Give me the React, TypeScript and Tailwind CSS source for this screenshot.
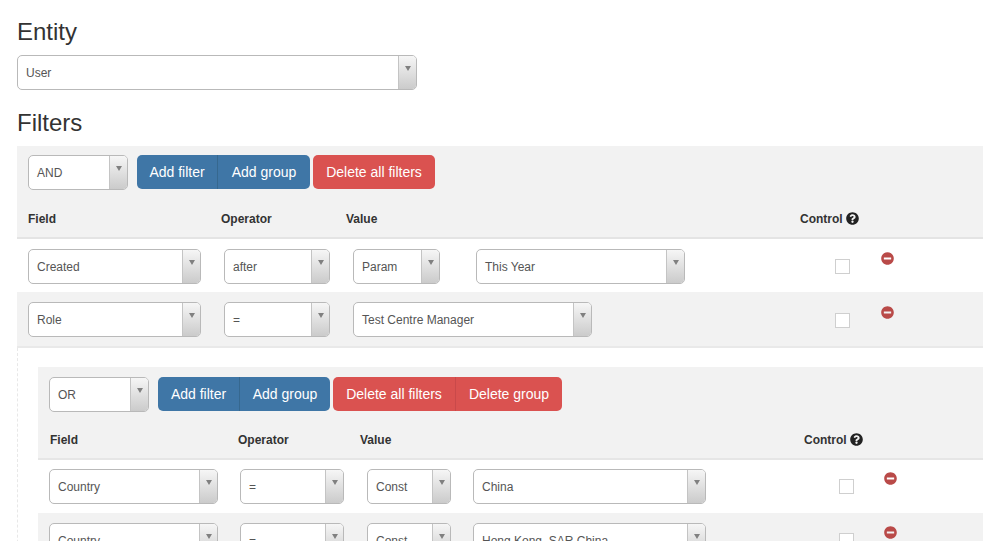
import React from 'react';
import { FaMinusCircle, FaQuestionCircle } from 'react-icons/fa';

const Select: React.FC<{ label: string; className: string }> = ({ label, className }) => (
  <div className={`flex h-[35px] flex-none overflow-hidden rounded-[5px] border border-[#b9b9b9] bg-white text-[12px] text-[#555] ${className}`}>
    <span className="flex flex-1 items-center truncate pl-[8px] pt-[1px]">{label}</span>
    <span className="flex w-[18px] flex-none justify-center border-l border-[#c4c4c4] bg-gradient-to-b from-[#f6f6f6] to-[#cbcbcb] pt-[10px]">
      <svg width="6" height="5" viewBox="0 0 6 5">
        <path d="M0 0h6L3 5z" fill="#808080" />
      </svg>
    </span>
  </div>
);

const Button: React.FC<{ label: string; className: string }> = ({ label, className }) => (
  <button className={`h-[34px] flex-none text-center text-[14px] text-white ${className}`}>{label}</button>
);

const Control: React.FC<{ className: string }> = ({ className }) => (
  <div className={`flex flex-none ${className}`}>
    <div className="mt-[7px] h-[15px] w-[15px] flex-none border border-[#cfcfcf] bg-white" />
    <FaMinusCircle size={13} className="flex-none text-[#b94a48]" />
  </div>
);

const HelpLabel: React.FC = () => (
  <span className="flex h-[16px] items-center gap-[3px]">
    Control
    <FaQuestionCircle size={13} className="-mt-[2px] text-[#222]" />
  </span>
);

const App: React.FC = () => {
  return (
    <div className="h-[541px] w-[1004px] overflow-hidden bg-white pl-[17px] pr-[21px] pt-[19px] font-['Liberation_Sans',Arial,sans-serif] text-[#333]">
      <h3 className="mb-[10px] text-[24px] leading-[26px]">Entity</h3>
      <Select label="User" className="w-[400px]" />
      <h3 className="mb-[10px] mt-[20px] text-[24px] leading-[26px]">Filters</h3>

      <div className="bg-[#f2f2f2]">
        <div className="flex pl-[11px] pt-[9px]">
          <Select label="AND" className="w-[100px]" />
          <div className="ml-[9px] flex">
            <Button label="Add filter" className="w-[81px] rounded-l-[5px] border-r border-[#36688f] bg-[#3f76a6]" />
            <Button label="Add group" className="w-[92px] rounded-r-[5px] bg-[#3f76a6]" />
          </div>
          <Button label="Delete all filters" className="ml-[3px] w-[122px] rounded-[5px] bg-[#da5250]" />
        </div>
        <div className="flex h-[49px] border-b-2 border-[#e4e4e4] pl-[11px] pt-[21px] text-[12px] font-bold leading-[16px]">
          <span className="w-[193px]">Field</span>
          <span className="w-[125px]">Operator</span>
          <span className="w-[454px]">Value</span>
          <HelpLabel />
        </div>

        <div className="flex h-[53px] bg-white pl-[11px] pt-[10px]">
          <Select label="Created" className="w-[173px]" />
          <Select label="after" className="ml-[23px] w-[106px]" />
          <div className="ml-[23px] flex w-[482px] flex-none">
            <Select label="Param" className="w-[87px]" />
            <Select label="This Year" className="ml-[36px] w-[209px]" />
          </div>
          <Control className="gap-[31px] pt-[3px]" />
        </div>

        <div className="flex h-[56px] border-b-2 border-[#e9e9e9] pl-[11px] pt-[10px]">
          <Select label="Role" className="w-[173px]" />
          <Select label="=" className="ml-[23px] w-[106px]" />
          <div className="ml-[23px] flex w-[482px] flex-none">
            <Select label="Test Centre Manager" className="w-[239px]" />
          </div>
          <Control className="gap-[31px] pt-[4px]" />
        </div>
      </div>

      <div className="border-l border-dashed border-[#e8e8e8] pl-[20px] pt-[19px]">
        <div className="bg-[#f2f2f2]">
          <div className="flex pl-[11px] pt-[10px]">
            <Select label="OR" className="w-[100px]" />
            <div className="ml-[9px] flex">
              <Button label="Add filter" className="w-[82px] rounded-l-[5px] border-r border-[#36688f] bg-[#3f76a6]" />
              <Button label="Add group" className="w-[90px] rounded-r-[5px] bg-[#3f76a6]" />
            </div>
            <div className="ml-[3px] flex">
              <Button label="Delete all filters" className="w-[123px] rounded-l-[5px] border-r border-[#c9494a] bg-[#da5250]" />
              <Button label="Delete group" className="w-[106px] rounded-r-[5px] bg-[#da5250]" />
            </div>
          </div>
          <div className="flex h-[48px] border-b-2 border-[#e6e6e6] pl-[12px] pt-[20px] text-[12px] font-bold leading-[16px]">
            <span className="w-[188px]">Field</span>
            <span className="w-[122px]">Operator</span>
            <span className="w-[444px]">Value</span>
            <HelpLabel />
          </div>

          <div className="flex h-[53px] bg-white pl-[11px] pt-[9px]">
            <Select label="Country" className="w-[169px]" />
            <Select label="=" className="ml-[22px] w-[104px]" />
            <div className="ml-[23px] flex w-[472px] flex-none">
              <Select label="Const" className="w-[84px]" />
              <Select label="China" className="ml-[22px] w-[233px]" />
            </div>
            <Control className="gap-[30px] pt-[3px]" />
          </div>

          <div className="flex h-[60px] pl-[11px] pt-[10px]">
            <Select label="Country" className="w-[169px]" />
            <Select label="=" className="ml-[22px] w-[104px]" />
            <div className="ml-[23px] flex w-[472px] flex-none">
              <Select label="Const" className="w-[84px]" />
              <Select label="Hong Kong, SAR China" className="ml-[22px] w-[233px]" />
            </div>
            <Control className="gap-[30px] pt-[3px]" />
          </div>
        </div>
      </div>
    </div>
  );
};

export default App;
